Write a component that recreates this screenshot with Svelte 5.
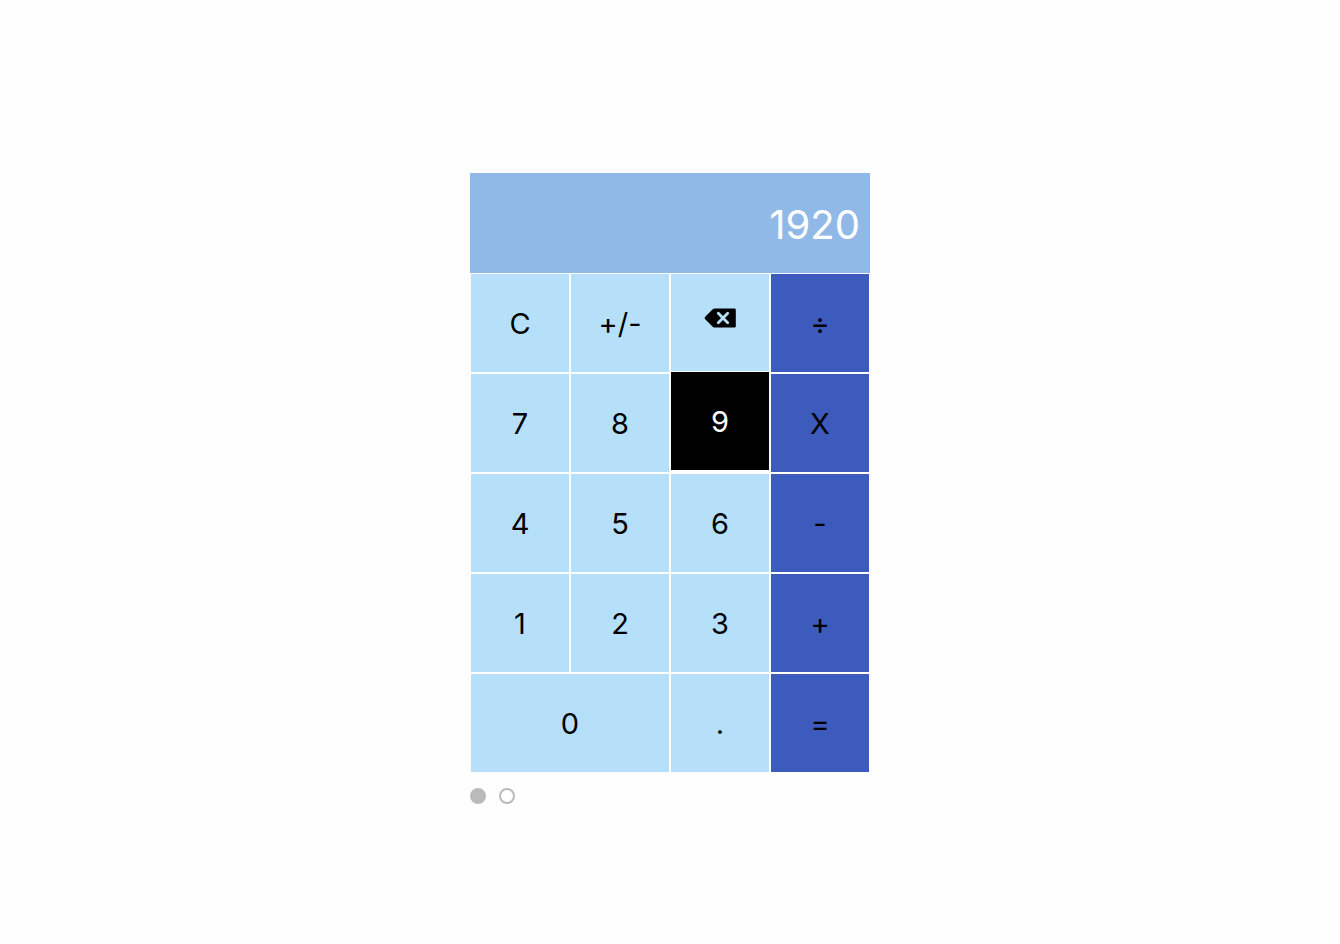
<script>
  const keys = [
    { label: 'C' }, { label: '+/-' }, { label: 'Backspace', icon: true }, { label: '÷', op: true },
    { label: '7' }, { label: '8' }, { label: '9' }, { label: 'X', op: true },
    { label: '4' }, { label: '5' }, { label: '6' }, { label: '-', op: true },
    { label: '1' }, { label: '2' }, { label: '3' }, { label: '+', op: true },
    { label: '0', wide: true }, { label: '.' }, { label: '=', op: true }
  ];
  let current = $state('1920');
  let active = $state('9');
  let theme = $state(0);

  function press(label) {
    active = label;
    if (label === 'C') current = '0';
    else if (label === 'Backspace') current = current.slice(0, -1) || '0';
    else if (/^[0-9.]$/.test(label)) current = current === '0' ? label : current + label;
    else if (label === '+/-') current = String(-Number(current));
  }
</script>

<main>
  <section class="calculator">
    <output class="display">{current}</output>
    <div class="keys">
      {#each keys as key}
        <button
          type="button"
          class="key"
          class:op={key.op}
          class:wide={key.wide}
          class:active={active === key.label}
          aria-label={key.label}
          onclick={() => press(key.label)}
        >
          {#if key.icon}
            <svg class="backspace" viewBox="0 0 32 20" aria-hidden="true">
              <path d="M10.600 .4H30.400Q31.800 .4 31.800 1.800V18.200Q31.800 19.600 30.400 19.600H10.600Q9.700 19.600 9 18.900L1.200 11.200Q0 10 1.200 8.800L9 1.100Q9.700 .4 10.600 .4Z" fill="currentColor" />
              <path d="M14.300 5.300L23.700 14.700M23.700 5.300L14.300 14.700" fill="none" stroke="#b6e0f9" stroke-width="2.800" stroke-linecap="round" />
            </svg>
          {:else}
            {key.label}
          {/if}
        </button>
      {/each}
    </div>
    <nav class="themes">
      {#each [0, 1] as n}
        <button type="button" class="dot" class:selected={theme === n} aria-label={'Theme ' + (n + 1)} onclick={() => (theme = n)}></button>
      {/each}
    </nav>
  </section>
</main>

<style>
  :global(body) {
    background: #fefefe;
  }

  main {
    box-sizing: border-box;
    min-height: 100vh;
    padding-top: 33px;
    display: flex;
    align-items: center;
    justify-content: center;
    font-family: Inter, "Liberation Sans", sans-serif;
  }

  .calculator {
    width: 100%;
    max-width: 400px;
  }

  .display {
    display: flex;
    align-items: center;
    justify-content: flex-end;
    box-sizing: border-box;
    min-height: 100px;
    padding: 3px 10px 0;
    background: #91b9e8;
    color: #fff;
    font-size: 40px;
    line-height: 48px;
  }

  .keys {
    display: grid;
    grid-template-columns: repeat(4, 1fr);
    grid-auto-rows: 100px;
  }

  .key {
    display: flex;
    align-items: center;
    justify-content: center;
    padding: 2px 0 0;
    border: 1px solid #fff;
    background: #b6e0f9;
    color: #000;
    font-family: inherit;
    font-size: 29px;
    line-height: 36px;
  }

  .op {
    background: #3d5abd;
  }

  .wide {
    grid-column: span 2;
  }

  .active {
    background: #000;
    color: #fff;
    transform: translateY(-2px);
  }

  .backspace {
    width: 32px;
    height: 20px;
    margin-bottom: 12px;
  }

  .themes {
    display: flex;
    gap: 13px;
    margin-top: 15px;
  }

  .dot {
    box-sizing: border-box;
    width: 16px;
    height: 16px;
    padding: 0;
    border: 2px solid #bababa;
    border-radius: 50%;
    background: #fff;
  }

  .selected {
    background: #bababa;
  }
</style>
